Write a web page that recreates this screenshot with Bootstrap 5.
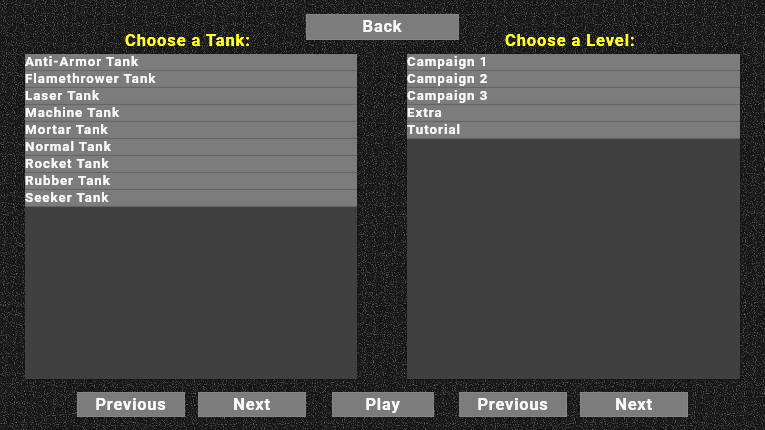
<!DOCTYPE html>
<html lang="en"><head><meta charset="utf-8"><title>Choose</title>
<link href="https://cdn.jsdelivr.net/npm/bootstrap@5.3.0/dist/css/bootstrap.min.css" rel="stylesheet">
<style>
html,body{height:100%;margin:0}
body{background-color:#1c1c1c;background-image:url("data:image/svg+xml,%3Csvg xmlns='http://www.w3.org/2000/svg' width='765' height='430'%3E%3Cfilter id='n' x='0' y='0' width='100%25' height='100%25' color-interpolation-filters='sRGB'%3E%3CfeTurbulence type='fractalNoise' baseFrequency='.9' numOctaves='1' seed='4'/%3E%3CfeGaussianBlur stdDeviation='.75'/%3E%3CfeColorMatrix values='0 0 0 0 .42 0 0 0 0 .42 0 0 0 0 .42 3.4 0 0 0 -1.72'/%3E%3C/filter%3E%3Crect width='765' height='430' fill='%23151515'/%3E%3Crect width='765' height='430' filter='url(%23n)'/%3E%3C/svg%3E");overflow:hidden}
.game-screen{width:765px;height:430px;padding:14px 25px 0;font-family:Roboto,sans-serif;font-weight:700;color:#f8f8f8}
.game-head{display:grid;grid-template-columns:281px 153px 1fr;height:40px}
.game-title{color:#ffff22;font-size:16.5px;letter-spacing:.9px;line-height:14px;align-self:end;padding-bottom:6px;white-space:nowrap;filter:blur(.55px);text-shadow:0 0 .6px #ffff22}
.game-title.t-left{padding-left:100px}
.game-title.t-right{padding-left:46px}
.game-btn{background:#7c7c7c;color:#f8f8f8;border:0;border-radius:0;padding:0;height:25px;font:700 16.5px/22px Roboto,sans-serif;letter-spacing:.75px;box-shadow:inset 0 0 0 1px #868686}
.game-btn>span,.game-row>span{filter:blur(.55px);display:inline-block;text-shadow:0 0 .6px #f8f8f8}
.game-btn:hover,.game-btn:active{background:#7c7c7c!important;color:#f8f8f8!important}
.game-btn.top-btn{width:153px;height:26px}
.game-panels{display:grid;grid-template-columns:332px 333px;column-gap:50px}
.game-panel{height:325px;background:#404040;border-radius:0;border:0;box-shadow:0 0 2px #111}
.game-row{height:17px;background:#7c7c7c;border:0;box-shadow:inset 0 -2px 1px -1px #636363;border-radius:0!important;padding:0;color:#f8f8f8;font-size:13.3px;letter-spacing:1px;line-height:15px;white-space:nowrap;margin:0!important}
.game-foot{padding:13px 0 0 52px}
.b-nav{width:108px}
.b-play{width:102px}
.gap-a{margin-left:13px}
.gap-b{margin-left:26px}
.gap-c{margin-left:25px}
</style></head>
<body>
<main class="game-screen">
  <div class="game-head">
    <div class="game-title t-left">Choose a Tank:</div>
    <button type="button" class="btn game-btn top-btn"><span>Back</span></button>
    <div class="game-title t-right">Choose a Level:</div>
  </div>
  <div class="game-panels">
    <div class="list-group game-panel">
      <div class="list-group-item game-row"><span>Anti-Armor Tank</span></div>
      <div class="list-group-item game-row"><span>Flamethrower Tank</span></div>
      <div class="list-group-item game-row"><span>Laser Tank</span></div>
      <div class="list-group-item game-row"><span>Machine Tank</span></div>
      <div class="list-group-item game-row"><span>Mortar Tank</span></div>
      <div class="list-group-item game-row"><span>Normal Tank</span></div>
      <div class="list-group-item game-row"><span>Rocket Tank</span></div>
      <div class="list-group-item game-row"><span>Rubber Tank</span></div>
      <div class="list-group-item game-row"><span>Seeker Tank</span></div>
    </div>
    <div class="list-group game-panel">
      <div class="list-group-item game-row"><span>Campaign 1</span></div>
      <div class="list-group-item game-row"><span>Campaign 2</span></div>
      <div class="list-group-item game-row"><span>Campaign 3</span></div>
      <div class="list-group-item game-row"><span>Extra</span></div>
      <div class="list-group-item game-row"><span>Tutorial</span></div>
    </div>
  </div>
  <div class="d-flex game-foot">
    <button type="button" class="btn game-btn b-nav"><span>Previous</span></button>
    <button type="button" class="btn game-btn b-nav gap-a"><span>Next</span></button>
    <button type="button" class="btn game-btn b-play gap-b"><span>Play</span></button>
    <button type="button" class="btn game-btn b-nav gap-c"><span>Previous</span></button>
    <button type="button" class="btn game-btn b-nav gap-a"><span>Next</span></button>
  </div>
</main>
<script src="https://cdn.jsdelivr.net/npm/bootstrap@5.3.0/dist/js/bootstrap.bundle.min.js"></script>
</body></html>
